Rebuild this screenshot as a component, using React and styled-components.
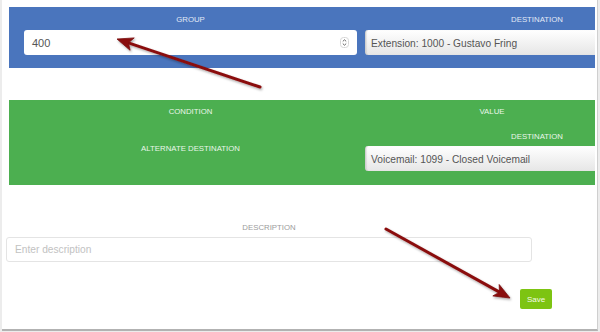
import React from 'react';
import styled, { createGlobalStyle } from 'styled-components';

const GlobalStyle = createGlobalStyle`
  * { box-sizing: border-box; }
  body {
    margin: 0;
    background: #ececec;
    font-family: 'Liberation Sans', Arial, sans-serif;
  }
`;

const Page = styled.div`
  position: relative;
  width: 600px;
  height: 332px;
  overflow: hidden;
`;

const Frame = styled.div`
  width: 596px;
  height: 331px;
  margin-left: 2px;
  padding-top: 7px;
  background: #fff;
  border-right: 1px solid #cfcfcf;
  border-bottom: 2px solid #b2b2b2;
  overflow: hidden;
`;

const Band = styled.div`
  margin: ${p => p.$top || 0}px 2px 0 7px;
  height: ${p => p.$height}px;
  background: ${p => p.$bg};
  overflow: hidden;
  display: grid;
  grid-template-columns: 333px 344px;
  column-gap: 8px;
  padding: ${p => p.$padTop}px 0 0 15px;
`;

const Field = styled.div`
  display: flex;
  flex-direction: column;
`;

const Label = styled.div`
  height: 10px;
  line-height: 10px;
  font-size: 7.8px;
  text-transform: uppercase;
  text-align: center;
  color: ${p => p.$color || '#e2e9f6'};
  margin-top: ${p => p.$mt || 0}px;
  margin-bottom: ${p => p.$mb || 0}px;
  width: ${p => p.$width || 'auto'};
`;

const NumberInput = styled.div`
  height: 25px;
  background: #fff;
  border-radius: 3px;
  display: flex;
  align-items: center;
  justify-content: space-between;
  padding: 0 8px;
  font-size: 11px;
  color: #555;
`;

const Select = styled.div`
  height: 25px;
  margin-top: ${p => p.$mt || 0}px;
  background: linear-gradient(#ffffff, #e6e6e6);
  border-left: 1px solid #cfcfcf;
  border-radius: 3px 0 0 3px;
  box-shadow: inset 1px 0 1px rgba(0, 0, 0, 0.08);
  display: flex;
  align-items: center;
  padding: 1px 0 0 5px;
  font-size: 10.2px;
  color: #555;
  white-space: nowrap;
`;

const DescBlock = styled.div`
  width: 526px;
  margin: 38px 0 0 4px;
  display: flex;
  flex-direction: column;
`;

const TextInput = styled.div`
  height: 25px;
  margin-top: 4px;
  border: 1px solid #e4e4e4;
  border-radius: 3px;
  display: flex;
  align-items: center;
  padding-left: 8px;
  font-size: 10.2px;
  color: #c2c2c2;
`;

const SaveButton = styled.div`
  width: 32px;
  height: 20px;
  margin: 27px 0 0 518px;
  background: #7dc412;
  border-radius: 2px;
  color: #f4fbe8;
  font-size: 8px;
  display: flex;
  align-items: center;
  justify-content: center;
`;

const Overlay = styled.svg`
  position: absolute;
  left: 0;
  top: 0;
  pointer-events: none;
`;

const Spinner = () => (
  <svg width="9" height="11" viewBox="0 0 9 11">
    <rect x="0.5" y="0.5" width="8" height="10" rx="3" fill="#fff" stroke="#d6d6d6" />
    <path d="M2.8 4.4 L4.5 2.8 L6.2 4.4" fill="none" stroke="#555" strokeWidth="0.9" />
    <path d="M2.8 6.6 L4.5 8.2 L6.2 6.6" fill="none" stroke="#555" strokeWidth="0.9" />
  </svg>
);

const Arrow = ({ x1, y1, x2, y2 }) => {
  const dx = x2 - x1;
  const dy = y2 - y1;
  const len = Math.sqrt(dx * dx + dy * dy);
  const ux = dx / len;
  const uy = dy / len;
  const nx = -uy;
  const ny = ux;
  const bx = x2 - 16 * ux;
  const by = y2 - 16 * uy;
  const mx = x2 - 12 * ux;
  const my = y2 - 12 * uy;
  const head = `${x2},${y2} ${bx + 6.5 * nx},${by + 6.5 * ny} ${mx},${my} ${bx - 6.5 * nx},${by - 6.5 * ny}`;
  return (
    <g filter="url(#shadow)">
      <line x1={x1} y1={y1} x2={mx} y2={my} stroke="#8a1010" strokeWidth="3" strokeLinecap="round" />
      <polygon points={head} fill="#8a1010" stroke="#7a0c0c" strokeWidth="0.8" strokeLinejoin="round" />
    </g>
  );
};

export default function App() {
  return (
    <Page>
      <GlobalStyle />
      <Frame>
        <Band $bg="#4a75bd" $height={61} $padTop={8}>
          <Field>
            <Label $mb={5}>Group</Label>
            <NumberInput>
              <span>400</span>
              <Spinner />
            </NumberInput>
          </Field>
          <Field>
            <Label $mb={5}>Destination</Label>
            <Select>Extension: 1000 - Gustavo Fring</Select>
          </Field>
        </Band>

        <Band $bg="#4caf50" $height={85} $padTop={7} $top={32}>
          <Field>
            <Label $color="#eaf6ea">Condition</Label>
            <Label $color="#eaf6ea" $mt={27}>Alternate Destination</Label>
          </Field>
          <Field>
            <Label $color="#eaf6ea" $width="254px">Value</Label>
            <Label $color="#eaf6ea" $mt={15}>Destination</Label>
            <Select $mt={4}>Voicemail: 1099 - Closed Voicemail</Select>
          </Field>
        </Band>

        <DescBlock>
          <Label $color="#9c9c9c">Description</Label>
          <TextInput>Enter description</TextInput>
        </DescBlock>

        <SaveButton>Save</SaveButton>
      </Frame>

      <Overlay width="600" height="332" viewBox="0 0 600 332">
        <defs>
          <filter id="shadow" x="-20%" y="-20%" width="140%" height="140%">
            <feDropShadow dx="1" dy="1.5" stdDeviation="1.2" floodColor="#000" floodOpacity="0.35" />
          </filter>
        </defs>
        <Arrow x1={260} y1={87} x2={117} y2={39} />
        <Arrow x1={386} y1={229} x2={510} y2={298} />
      </Overlay>
    </Page>
  );
}
